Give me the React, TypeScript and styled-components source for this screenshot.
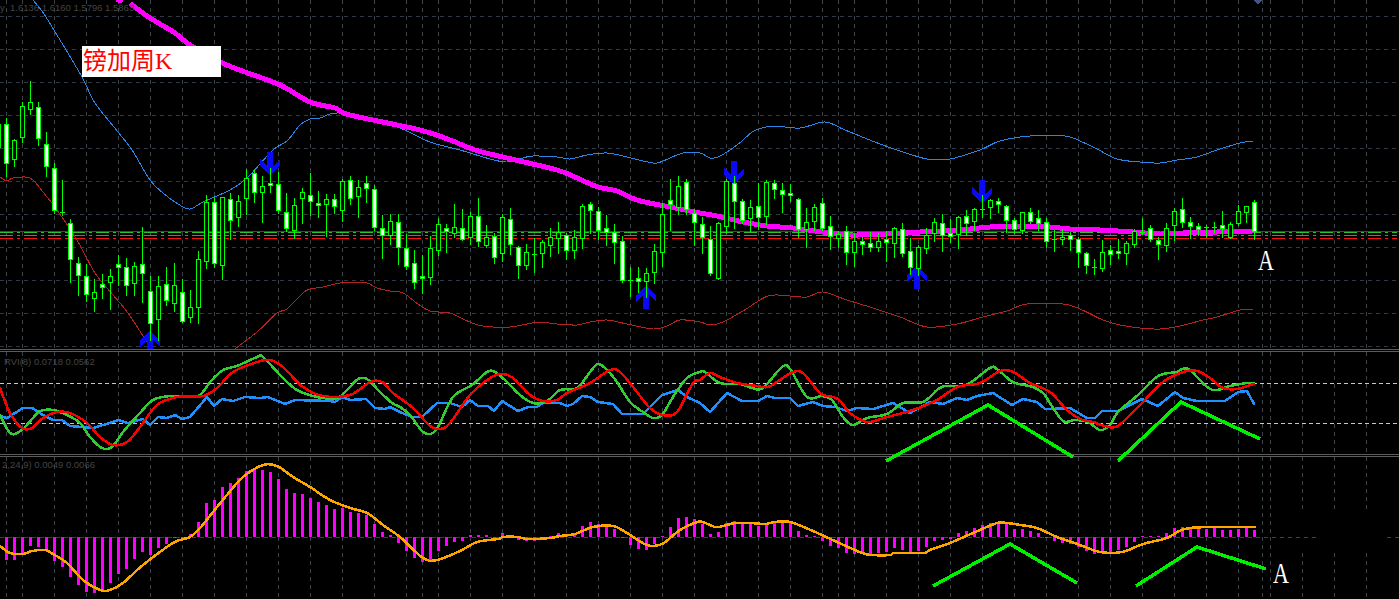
import React from "react";
import styled, { createGlobalStyle } from "styled-components";

const Global = createGlobalStyle`
  html, body { margin: 0; padding: 0; background: #000; overflow: hidden; }
  #root { width: 1399px; height: 599px; }
`;

const Frame = styled.div`
  position: relative;
  width: 1399px;
  height: 599px;
  background: #000;
  display: flex;
  flex-direction: column;
  overflow: hidden;
`;

const Panel = styled.section<{ $height: number; $last?: boolean }>`
  position: relative;
  flex: none;
  height: ${(p) => p.$height}px;
  overflow: hidden;
  border-bottom: ${(p) => (p.$last ? "none" : "3px double #5c5c5c")};
`;

const ChartSvg = styled.svg`
  display: block;
  width: 1399px;
  height: 100%;
  shape-rendering: crispEdges;
`;

const ValueLabel = styled.div<{ $top: number; $left: number }>`
  position: absolute;
  top: ${(p) => p.$top}px;
  left: ${(p) => p.$left}px;
  font: 9.5px/12px "Liberation Sans", Arial, sans-serif;
  color: #444;
  white-space: pre;
`;

const TitleBadge = styled.div`
  position: absolute;
  top: 46px;
  left: 82px;
  width: 139px;
  height: 31px;
  box-sizing: border-box;
  padding-left: 1px;
  display: flex;
  align-items: center;
  background: #fff;
  color: #f00;
  font: 400 24px/31px "Liberation Serif", "Noto Sans CJK SC", serif;
`;

const PointLabel = styled.div<{ $top: number; $left: number }>`
  position: absolute;
  top: ${(p) => p.$top}px;
  left: ${(p) => p.$left}px;
  width: 18px;
  height: 26px;
  background: #000;
  color: #fff;
  text-align: center;
  font: 400 22px/26px "Liberation Serif", serif;
`;

const Glyph = styled.span`
  display: inline-block;
  transform: scaleY(1.36);
  transform-origin: 50% 60%;
`;

const Overlay = styled.svg`
  position: absolute;
  inset: 0;
  width: 1399px;
  height: 599px;
  pointer-events: none;
  shape-rendering: crispEdges;
`;

type P = [number, number];
type Kind = "w" | "h" | "d";
type C = [number, number, number, number, Kind];

const candles: C[] = [
  [124,147,118,160,"h"],[124,163,118,176,"w"],[140,159,139,166,"h"],[106,137,102,142,"h"],[102,109,81,114,"h"],[107,138,102,145,"w"],[144,166,132,176,"w"],[168,210,163,213,"w"],[212,212,180,215,"d"],[223,259,219,282,"w"],
  [263,275,257,295,"w"],[276,294,264,301,"w"],[292,298,279,311,"h"],[284,287,274,298,"w"],[276,282,269,309,"h"],[264,267,255,285,"w"],[267,285,258,295,"w"],[266,283,262,295,"h"],[264,273,227,302,"w"],[291,323,276,340,"w"],
  [286,319,276,340,"h"],[284,300,267,305,"w"],[285,303,263,311,"h"],[292,321,279,322,"w"],[307,317,290,322,"h"],[259,307,251,323,"h"],[202,261,195,268,"h"],[202,263,198,267,"w"],[197,265,197,279,"h"],[199,220,193,239,"w"],
  [201,217,195,226,"h"],[178,198,169,214,"h"],[173,192,170,202,"w"],[186,192,176,222,"h"],[183,185,168,192,"w"],[184,210,172,213,"w"],[212,228,193,231,"w"],[205,230,198,238,"h"],[192,198,188,223,"h"],[195,201,173,215,"w"],
  [203,205,191,217,"w"],[199,204,194,236,"h"],[199,206,194,213,"w"],[181,210,179,221,"h"],[180,198,176,204,"w"],[187,196,180,217,"h"],[183,188,176,202,"w"],[189,227,185,230,"w"],[228,235,215,258,"w"],[221,235,214,244,"h"],
  [222,247,214,264,"w"],[248,266,234,269,"w"],[263,282,250,288,"w"],[276,278,255,293,"w"],[248,277,236,284,"h"],[224,250,218,255,"h"],[228,231,224,252,"w"],[227,233,204,237,"h"],[228,239,209,240,"w"],[216,237,212,244,"h"],
  [216,241,198,246,"w"],[237,245,225,247,"h"],[236,257,233,263,"w"],[217,253,214,261,"h"],[219,244,208,254,"w"],[247,265,246,278,"w"],[252,265,244,269,"h"],[254,254,238,272,"d"],[242,253,240,267,"h"],[237,245,228,256,"h"],
  [232,238,222,253,"h"],[235,250,233,259,"w"],[237,250,230,258,"h"],[206,238,204,248,"h"],[204,210,202,233,"w"],[211,230,207,239,"w"],[228,232,215,245,"w"],[232,242,224,263,"w"],[241,280,236,282,"w"],[280,280,267,296,"d"],
  [278,281,267,292,"w"],[273,281,268,297,"h"],[251,272,244,283,"h"],[214,252,203,266,"h"],[200,204,179,230,"w"],[186,207,176,214,"h"],[182,209,179,214,"w"],[213,222,209,245,"w"],[224,237,217,253,"w"],[239,273,226,275,"w"],
  [223,278,222,279,"h"],[181,226,179,233,"h"],[183,201,176,228,"w"],[201,220,199,223,"w"],[207,218,200,231,"h"],[206,217,183,229,"w"],[182,216,180,224,"h"],[183,189,180,198,"w"],[190,194,183,212,"w"],[193,195,184,201,"w"],
  [199,229,198,237,"w"],[222,229,208,247,"h"],[207,221,204,230,"h"],[203,228,198,230,"w"],[226,236,216,249,"w"],[234,238,231,247,"h"],[231,252,226,264,"w"],[241,252,233,266,"h"],[241,244,237,254,"w"],[243,247,232,251,"w"],
  [241,247,233,251,"h"],[239,242,231,261,"w"],[228,243,227,257,"h"],[229,253,223,256,"w"],[251,267,238,274,"w"],[247,268,245,275,"h"],[235,248,228,253,"h"],[222,233,218,241,"h"],[223,235,214,251,"w"],[233,236,219,242,"w"],
  [217,234,216,248,"h"],[216,223,210,235,"w"],[209,221,208,230,"h"],[209,209,195,217,"d"],[200,207,199,218,"h"],[201,204,198,212,"w"],[206,220,205,232,"w"],[220,229,218,233,"w"],[212,230,212,233,"h"],[212,221,208,223,"w"],
  [218,223,210,230,"w"],[222,241,218,247,"w"],[239,239,230,251,"d"],[237,239,229,244,"h"],[235,239,232,250,"w"],[239,252,237,267,"w"],[253,265,252,273,"w"],[267,267,259,274,"d"],[252,268,240,271,"h"],[250,254,245,264,"w"],
  [251,253,239,258,"w"],[243,253,241,264,"h"],[231,244,229,247,"h"],[232,232,218,234,"d"],[228,239,225,241,"w"],[240,244,237,259,"w"],[228,245,223,251,"h"],[211,225,208,240,"h"],[209,222,198,227,"w"],[222,226,217,238,"w"],
  [226,229,223,235,"w"],[227,227,225,237,"d"],[227,227,222,232,"d"],[225,228,211,237,"w"],[224,237,222,238,"h"],[211,223,205,225,"h"],[206,212,206,222,"h"],[202,231,200,239,"w"],
];

const macdBars = [
  560,560,553,546,547,550,561,567,577,585,592,593,590,583,574,569,559,552,555,548,544,538,538,534,522,503,500,487,483,478,471,469,470,472,479,489,493,494,498,502,505,509,508,512,513,515,524,532,535,543,551,558,562,560,551,546,542,
  541,535,535,535,539,533,535,540,541,541,537,536,533,535,533,526,522,524,526,529,538,545,549,550,544,536,527,518,517,519,524,534,532,523,521,524,524,526,524,523,522,522,531,535,536,541,546,548,553,554,553,554,553,552,548,550,552,551,547,
  541,540,539,533,531,528,525,523,522,524,529,529,531,533,538,541,543,544,547,551,554,552,552,550,547,542,536,536,536,533,528,527,527,529,529,528,530,530,529,526,530,
];

const bbUpper: P[] = [[33,0],[44,14],[60,40],[82,77],[95,103],[118,132],[132,150],[150,180],[163,193],[178,204],[190,209],[203,202],[230,190],[247,178],[273,150],[287,141],[300,125],[310,119],[320,118],[330,114],[340,113],[360,116],[400,128],[430,142],[460,150],[490,159],[507,162],[523,158],[533,156],[557,157],[570,159],[587,155],[607,153],[627,157],[653,163],[663,161],[683,153],[700,153],[710,158],[718,157],[730,150],[742,141],[752,132],[762,128],[775,126],[800,128],[825,122],[845,130],[880,144],[897,150],[927,159],[950,159],[980,150],[1000,141],[1030,136],[1065,136],[1080,141],[1097,149],[1117,159],[1140,162],[1160,163],[1177,160],[1197,157],[1217,150],[1240,143],[1253,141]];
const bbLower: P[] = [[0,177],[7,181],[13,178],[30,178],[43,192],[57,210],[77,240],[95,273],[113,295],[128,313],[147,342],[153,349],[156,354]];
const bbLower2: P[] = [[228,354],[235,349],[257,332],[277,313],[287,309],[303,293],[310,289],[323,287],[340,283],[350,282],[367,283],[377,288],[390,291],[403,293],[418,304],[430,311],[450,313],[463,319],[478,325],[493,327],[510,327],[527,324],[540,322],[557,324],[577,325],[590,322],[607,320],[627,324],[653,329],[667,326],[680,320],[700,322],[710,325],[723,322],[743,311],[768,296],[790,296],[807,297],[823,292],[847,300],[873,308],[900,317],[927,327],[957,324],[983,317],[1007,311],[1027,304],[1063,304],[1080,309],[1103,320],[1120,325],[1140,328],[1160,329],[1180,326],[1203,320],[1217,317],[1240,310],[1253,309]];
const maLine: P[] = [[117,0],[118,1],[122,1]];
const maLine2: P[] = [[132,5],[150,18],[175,33],[190,45],[220,62],[245,72],[280,85],[310,102],[335,108],[350,115],[420,130],[450,140],[475,150],[507,158],[557,170],[577,178],[598,187],[617,191],[637,200],[670,207],[700,213],[717,216],[743,222],[767,226],[793,228],[823,232],[850,235],[887,234],[920,232],[960,230],[990,227],[1020,226],[1050,227],[1070,229],[1100,230],[1133,232],[1160,234],[1183,233],[1217,232],[1253,231]];

const rviGreen: P[] = [[0,415],[5,425],[10,433],[15,434],[23,429],[33,418],[40,411],[53,410],[67,415],[80,423],[90,437],[102,448],[112,447],[123,432],[140,413],[153,400],[170,396],[187,397],[200,395],[210,382],[223,370],[237,366],[257,357],[263,357],[283,378],[297,390],[317,397],[337,398],[350,387],[358,379],[367,379],[380,392],[392,403],[400,407],[410,415],[422,431],[430,434],[438,427],[453,397],[472,385],[487,372],[495,372],[507,382],[520,395],[533,403],[547,401],[560,390],[577,388],[590,372],[598,364],[607,370],[617,382],[630,402],[643,412],[653,418],[662,415],[673,397],[687,378],[700,372],[705,372],[720,383],[740,384],[752,388],[763,388],[782,367],[790,369],[807,397],[822,396],[832,400],[843,417],[853,425],[867,418],[887,414],[903,403],[923,402],[937,390],[945,386],[960,386],[970,383],[990,368],[997,369],[1013,382],[1033,387],[1043,393],[1050,403],[1063,421],[1075,420],[1088,422],[1100,430],[1110,425],[1118,412],[1138,395],[1158,376],[1177,372],[1182,369],[1190,370],[1207,387],[1217,390],[1230,386],[1247,383],[1254,383]];
const rviRed: P[] = [[0,388],[10,413],[22,428],[32,428],[43,418],[57,412],[70,413],[87,423],[100,437],[113,445],[127,442],[140,427],[157,405],[177,397],[203,396],[217,388],[233,372],[257,362],[270,360],[283,367],[303,387],[323,396],[350,395],[370,382],[382,382],[393,393],[413,408],[430,426],[440,429],[450,423],[470,395],[490,378],[502,374],[513,378],[530,395],[543,401],[557,400],[567,393],[590,383],[610,370],[620,372],[633,387],[650,408],[663,415],[677,412],[693,383],[700,380],[710,373],[720,377],[737,383],[757,386],[768,387],[780,380],[793,372],[803,373],[817,390],[823,395],[838,399],[850,413],[867,422],[887,417],[913,410],[937,400],[957,387],[980,383],[1000,371],[1013,372],[1030,383],[1050,392],[1067,410],[1080,419],[1093,422],[1105,426],[1118,426],[1140,405],[1163,382],[1183,372],[1197,371],[1210,378],[1223,388],[1237,389],[1254,384]];
const rviBlue: P[] = [[0,416],[7,418],[23,408],[32,408],[43,415],[53,420],[62,420],[70,426],[93,428],[110,423],[118,420],[128,423],[143,419],[150,425],[158,417],[167,418],[175,415],[182,419],[190,417],[207,397],[214,406],[222,399],[233,401],[245,397],[260,398],[268,397],[285,404],[295,400],[330,401],[335,402],[342,397],[350,400],[366,399],[375,408],[385,409],[390,407],[400,412],[412,417],[422,417],[437,403],[450,403],[462,407],[470,400],[478,406],[488,406],[494,411],[502,401],[518,411],[528,407],[537,407],[543,403],[560,403],[567,406],[573,404],[582,396],[590,397],[598,402],[613,404],[622,414],[643,414],[662,395],[678,390],[687,397],[700,403],[710,412],[727,393],[742,401],[758,401],[767,396],[775,398],[790,398],[798,406],[813,402],[823,406],[835,407],[847,411],[857,408],[873,409],[893,403],[910,413],[930,402],[943,404],[957,398],[967,400],[977,396],[993,393],[1012,405],[1023,399],[1037,402],[1045,409],[1050,409],[1070,408],[1087,418],[1095,418],[1102,411],[1118,411],[1142,399],[1158,406],[1175,392],[1183,398],[1197,401],[1225,401],[1238,392],[1247,391],[1254,404]];
const macdSignal: P[] = [[0,546],[10,553],[23,554],[32,551],[45,550],[53,554],[67,563],[83,580],[100,590],[110,590],[123,583],[143,565],[173,543],[190,537],[200,528],[213,512],[227,495],[243,477],[263,465],[277,466],[293,477],[310,487],[330,500],[350,508],[367,513],[383,525],[400,537],[423,558],[437,560],[460,551],[477,542],[498,539],[503,537],[518,537],[527,539],[550,538],[560,536],[575,534],[593,527],[613,526],[627,533],[647,545],[662,544],[680,530],[697,522],[703,522],[715,527],[723,526],[735,523],[750,523],[765,524],[775,522],[790,522],[813,531],[837,542],[862,553],[872,555],[890,555],[895,553],[923,553],[930,550],[950,543],[973,533],[997,523],[1007,523],[1020,525],[1037,528],[1057,537],[1080,545],[1100,552],[1122,552],[1143,544],[1167,538],[1190,528],[1255,527]];

const zigzags: P[][] = [
  [[886,461],[988,405],[1073,457]],
  [[1118,461],[1181,402],[1260,439]],
  [[933,586],[1010,544],[1077,583]],
  [[1136,586],[1197,547],[1266,569]],
];

const pts = (p: P[]) => p.map((q) => q.join(",")).join(" ");

const smoothPath = (p: P[]) => {
  let d = `M${p[0][0]} ${p[0][1]}`;
  for (let i = 0; i < p.length - 1; i++) {
    const a = p[Math.max(i - 1, 0)];
    const b = p[i];
    const c = p[i + 1];
    const e = p[Math.min(i + 2, p.length - 1)];
    const c1x = b[0] + (c[0] - a[0]) / 6;
    const c1y = b[1] + (c[1] - a[1]) / 6;
    const c2x = c[0] - (e[0] - b[0]) / 6;
    const c2y = c[1] - (e[1] - b[1]) / 6;
    d += ` C${c1x} ${c1y} ${c2x} ${c2y} ${c[0]} ${c[1]}`;
  }
  return d;
};

const verticals = [6, 422, 838, 1262, ...Array.from({ length: 43 }, (_, k) => 22 + 32 * k)];
const mainHorizontals = Array.from({ length: 11 }, (_, k) => 16 + 33 * k);

const VerticalGrid = ({ top, bottom }: { top: number; bottom: number }) => (
  <g stroke="#3a4448" strokeWidth={1} strokeDasharray="4 4">
    {verticals.map((x) => (
      <line key={x} x1={x + 0.5} x2={x + 0.5} y1={top} y2={bottom} />
    ))}
  </g>
);

const Trace = ({ points, color, width }: { points: P[]; color: string; width: number }) => (
  <polyline points={pts(points)} fill="none" stroke={color} strokeWidth={width} strokeLinejoin="round" strokeLinecap="round" />
);

const Curve = ({ points, color, width }: { points: P[]; color: string; width: number }) => (
  <path d={smoothPath(points)} fill="none" stroke={color} strokeWidth={width} strokeLinejoin="round" strokeLinecap="round" />
);

const DownArrow = ({ x, y }: { x: number; y: number }) => (
  <polygon
    fill="#0a0af5"
    transform={`translate(${x} ${y})`}
    points="-3,0 3,0 3,14 10,7 10,13 0,24 -10,13 -10,7 -3,14"
  />
);
const UpArrow = ({ x, y }: { x: number; y: number }) => (
  <polygon
    fill="#0a0af5"
    transform={`translate(${x} ${y})`}
    points="-3,24 3,24 3,10 10,17 10,11 0,0 -10,11 -10,17 -3,10"
  />
);

const Candle = ({ c, i }: { c: C; i: number }) => {
  const x = 6 + 8 * (i - 1);
  const [top, bottom, hi, lo, kind] = c;
  return (
    <g>
      <line x1={x + 0.5} x2={x + 0.5} y1={hi} y2={lo + 1} stroke="#00ff00" />
      {kind === "d" ? (
        <line x1={x - 2} x2={x + 3} y1={top + 0.5} y2={top + 0.5} stroke="#00ff00" />
      ) : (
        <rect
          x={x - 1.5}
          y={top + 0.5}
          width={4}
          height={bottom - top}
          fill={kind === "w" ? "#fff" : "#000"}
          stroke="#00ff00"
        />
      )}
    </g>
  );
};

export default function App() {
  return (
    <>
      <Global />
      <Frame>
        <Panel $height={349}>
          <ChartSvg viewBox="0 0 1399 349">
            <VerticalGrid top={0} bottom={349} />
            <g stroke="#2f3a46" strokeDasharray="4 4">
              {mainHorizontals.map((y) => (
                <line key={y} x1={0} x2={1399} y1={y + 0.5} y2={y + 0.5} />
              ))}
            </g>
            <line x1={0} x2={1399} y1={231.5} y2={231.5} stroke="#3c4a40" />
            <g strokeDasharray="13 4 3 4" strokeWidth={1}>
              <line x1={0} x2={1397} y1={232.5} y2={232.5} stroke="#2fbf2f" />
              <line x1={0} x2={1397} y1={235.5} y2={235.5} stroke="#22b022" />
            </g>
            <line x1={0} x2={1397} y1={238.5} y2={238.5} stroke="#ff1010" strokeDasharray="13 4 3 4" />
            <Curve points={bbUpper} color="#2a86e6" width={1} />
            <Curve points={bbLower} color="#b52222" width={1} />
            <Curve points={bbLower2} color="#b52222" width={1} />
            <Trace points={maLine} color="#ff00ff" width={3} />
            <Curve points={maLine2} color="#ff00ff" width={5} />
            <polygon points="1253,0 1263,0 1258,4" fill="#45557f" />
            <DownArrow x={270} y={152} />
            <DownArrow x={734} y={161} />
            <DownArrow x={982} y={180} />
            <UpArrow x={150} y={330} />
            <UpArrow x={646} y={285} />
            <UpArrow x={917} y={265} />
            {candles.map((c, i) => (
              <Candle key={i} c={c} i={i} />
            ))}
          </ChartSvg>
          <ValueLabel $top={2} $left={0}>{"y  1.6136 1.6160 1.5796 1.5863"}</ValueLabel>
          <TitleBadge>镑加周K</TitleBadge>
          <PointLabel $top={248} $left={1257}>
            <Glyph>A</Glyph>
          </PointLabel>
        </Panel>

        <Panel $height={102}>
          <ChartSvg viewBox="0 352 1399 102">
            <VerticalGrid top={352} bottom={454} />
            <g stroke="#c8c8c8" strokeDasharray="4 3">
              <line x1={0} x2={1399} y1={383.5} y2={383.5} />
              <line x1={0} x2={1399} y1={423.5} y2={423.5} />
            </g>
            <Trace points={rviBlue} color="#1e90ff" width={2.5} />
            <Curve points={rviGreen} color="#32cd32" width={2.5} />
            <Curve points={rviRed} color="#ff0000" width={2.5} />
          </ChartSvg>
          <ValueLabel $top={4} $left={4}>RVI(8) 0.0718 0.0562</ValueLabel>
        </Panel>

        <Panel $height={142} $last>
          <ChartSvg viewBox="0 457 1399 142">
            <VerticalGrid top={457} bottom={599} />
            <rect x={1285} y={510} width={100} height={42} fill="#000" />
            <g stroke="#3c4448" strokeDasharray="4 4">
              <line x1={0} x2={1320} y1={537.5} y2={537.5} />
              <line x1={1387} x2={1399} y1={537.5} y2={537.5} />
            </g>
            <g fill="#ff00ff">
              {macdBars.map((v, i) => (
                <rect key={i} x={5 + 8 * i} y={Math.min(v, 537)} width={3} height={Math.max(Math.abs(v - 537), 1)} />
              ))}
            </g>
            <Curve points={macdSignal} color="#ffa500" width={2.5} />
          </ChartSvg>
          <ValueLabel $top={2} $left={2}>{"2,24,9) 0.0049 0.0066"}</ValueLabel>
          <PointLabel $top={104} $left={1272}>
            <Glyph>A</Glyph>
          </PointLabel>
        </Panel>

        <Overlay viewBox="0 0 1399 599">
          {zigzags.map((z, i) => (
            <polyline key={i} points={pts(z)} fill="none" stroke="#00f000" strokeWidth={3.5} strokeLinejoin="miter" />
          ))}
        </Overlay>
      </Frame>
    </>
  );
}
